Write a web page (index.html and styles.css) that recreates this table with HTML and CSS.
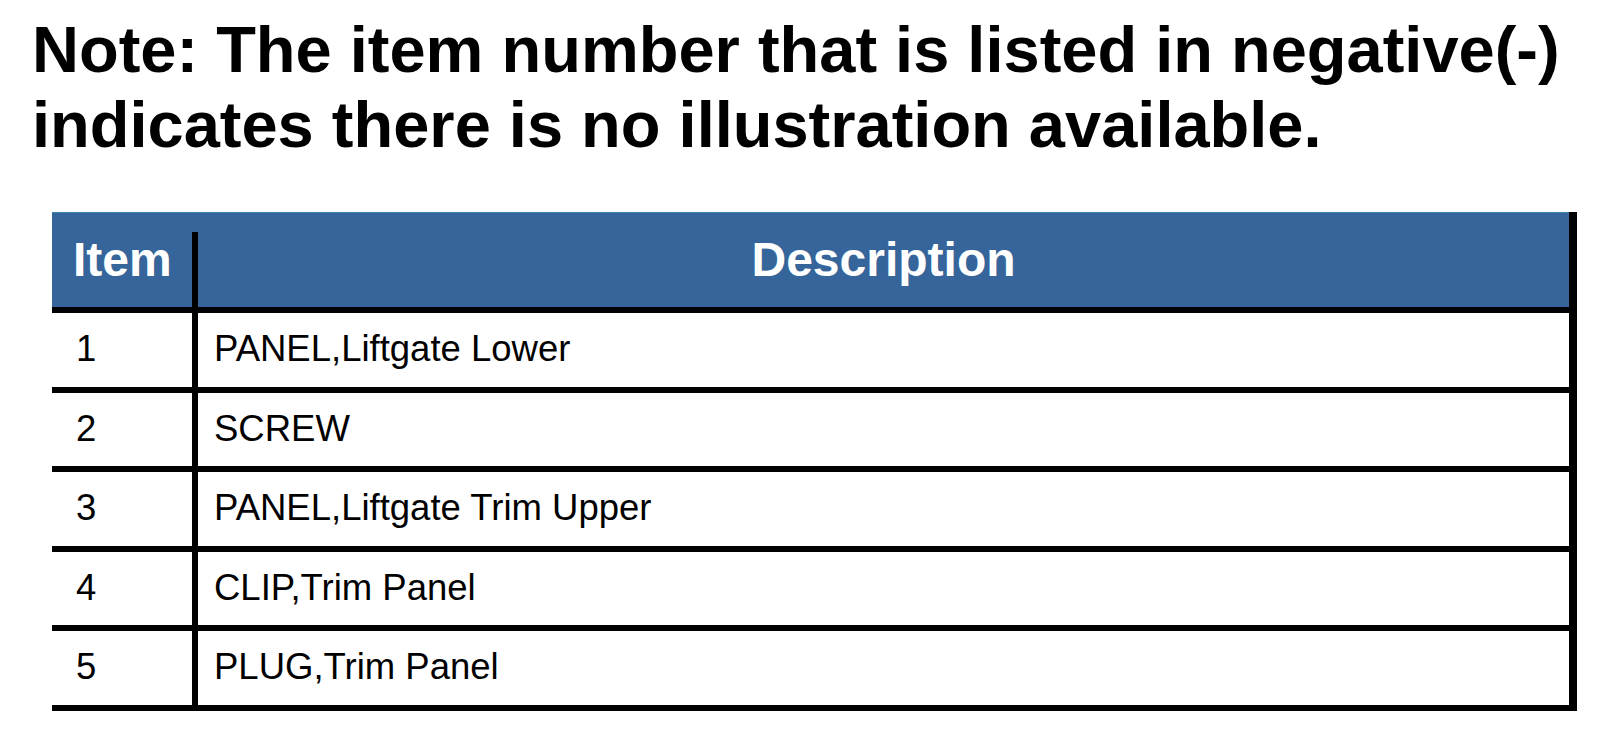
FILE: index.html
```html
<!DOCTYPE html>
<html lang="en">
<head>
<meta charset="utf-8">
<title>Parts list</title>
<link rel="stylesheet" href="styles.css">
</head>
<body>
<p class="note">Note: The item number that is listed in negative(-)<br>indicates there is no illustration available.</p>
<div class="parts">
  <div class="head">
    <div class="hitem">Item</div>
    <div class="hdesc">Description</div>
  </div>
  <div class="row"><div class="num">1</div><div class="desc">PANEL,Liftgate Lower</div></div>
  <div class="row"><div class="num">2</div><div class="desc">SCREW</div></div>
  <div class="row"><div class="num">3</div><div class="desc">PANEL,Liftgate Trim Upper</div></div>
  <div class="row"><div class="num">4</div><div class="desc">CLIP,Trim Panel</div></div>
  <div class="row"><div class="num">5</div><div class="desc">PLUG,Trim Panel</div></div>
</div>
</body>
</html>
```

FILE: styles.css
```css
html, body {
  margin: 0;
  padding: 0;
  background: #ffffff;
}

body {
  font-family: "Liberation Sans", Arial, sans-serif;
  color: #000;
}

.note {
  margin: 0;
  padding: 12px 0 0 32px;
  font-size: 65px;
  font-weight: bold;
  line-height: 75px;
}

.parts {
  margin: 50px 0 0 52px;
  width: 1517px;
  border-right: 8px solid #000;
}

.head {
  display: grid;
  grid-template-columns: 140px 1fr;
  height: 94px;
  background: #35659a;
  border-top: 1px solid #3d82b0;
  border-bottom: 6px solid #000;
  color: #fff;
  font-size: 48px;
  font-weight: bold;
}

.hitem {
  padding-left: 21px;
  line-height: 94px;
}

.hdesc {
  margin-top: 19px;
  border-left: 6px solid #000;
  line-height: 55px;
  text-align: center;
}

.row {
  display: grid;
  grid-template-columns: 140px 1fr;
  height: 74px;
  border-bottom: 6px solid #000;
  font-size: 36.5px;
}

.row:nth-child(odd) {
  height: 73px;
}

.num {
  display: flex;
  align-items: center;
  padding-left: 24px;
  padding-bottom: 2px;
}

.desc {
  display: flex;
  align-items: center;
  padding-left: 16px;
  padding-bottom: 2px;
  border-left: 6px solid #000;
}
```
